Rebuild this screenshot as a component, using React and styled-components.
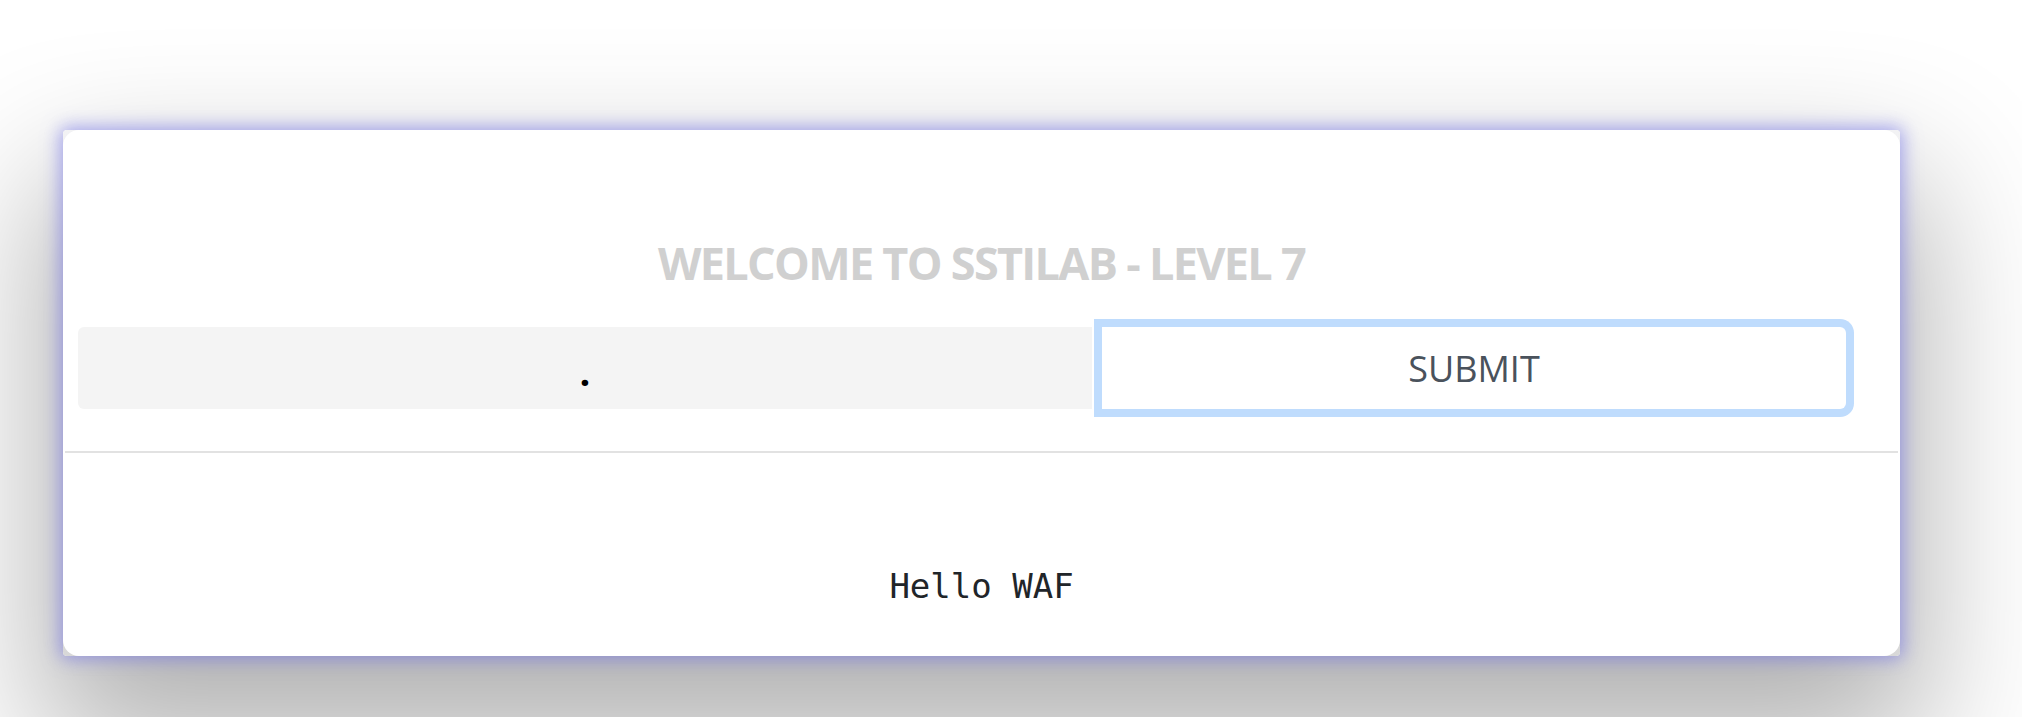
import styled, { createGlobalStyle } from "styled-components";

const GlobalStyle = createGlobalStyle`
    html, body {
        margin: 0;
        padding: 0;
        background: #ffffff;
        overflow: hidden;
    }
    * {
        box-sizing: border-box;
    }
`

const App = () => {

    return (
        <Page>
            <GlobalStyle />
            <Frame>
                <Card>
                    <Title>WELCOME TO SSTILAB - LEVEL 7</Title>
                    <FormRow>
                        <PayloadInput defaultValue="." />
                        <SubmitButton>SUBMIT</SubmitButton>
                    </FormRow>
                    <Divider />
                    <Output>Hello WAF</Output>
                </Card>
            </Frame>
        </Page>
    )
};

const Page = styled.div`
    width: 2022px;
    height: 717px;
    padding: 130px 122px 0 63px;
    background: #ffffff;
`

const Frame = styled.div`
    background: linear-gradient(#f2f2f4, #d8d8d8);
    border-radius: 4px;
    box-shadow:
        0 0 18px 3px rgba(112, 112, 232, 0.6),
        0 70px 140px 24px rgba(0, 0, 0, 0.3);
`

const Card = styled.div`
    display: flex;
    flex-direction: column;
    align-items: stretch;
    background: #ffffff;
    border-radius: 16px;
    padding: 105px 0 50px;
`

const Title = styled.h1`
    margin: 0 0 36px;
    font-family: "Open Sans", "Noto Sans", sans-serif;
    font-weight: 700;
    font-size: 45px;
    line-height: 56px;
    letter-spacing: -1.7px;
    color: #d0d0d0;
    text-align: center;
`

const FormRow = styled.div`
    display: flex;
    padding: 0 54px 0 15px;
    height: 82px;
`

const PayloadInput = styled.input`
    flex: 1021 1 0;
    min-width: 0;
    height: 82px;
    padding: 6px 0 0;
    border: none;
    outline: none;
    border-radius: 6px 0 0 6px;
    background: #f4f4f4;
    font-family: "Open Sans", "Noto Sans", sans-serif;
    font-weight: 700;
    font-size: 38px;
    color: #000000;
    text-align: center;
`

const SubmitButton = styled.button`
    flex: 737 1 0;
    min-width: 0;
    margin-left: 10px;
    height: 82px;
    border: none;
    border-radius: 0 6px 6px 0;
    background: #ffffff;
    box-shadow: 0 0 0 8px #bfdcfd;
    font-family: "Open Sans", "Noto Sans", sans-serif;
    font-size: 36px;
    color: #4a525c;
    cursor: pointer;
`

const Divider = styled.hr`
    margin: 42px 2px 0;
    border: none;
    height: 2px;
    background: #e2e2e2;
`

const Output = styled.pre`
    margin: 113px 0 0;
    font-family: "DejaVu Sans Mono", "Liberation Mono", monospace;
    font-size: 34px;
    line-height: 40px;
    color: #212529;
    text-align: center;
`

export default App;
